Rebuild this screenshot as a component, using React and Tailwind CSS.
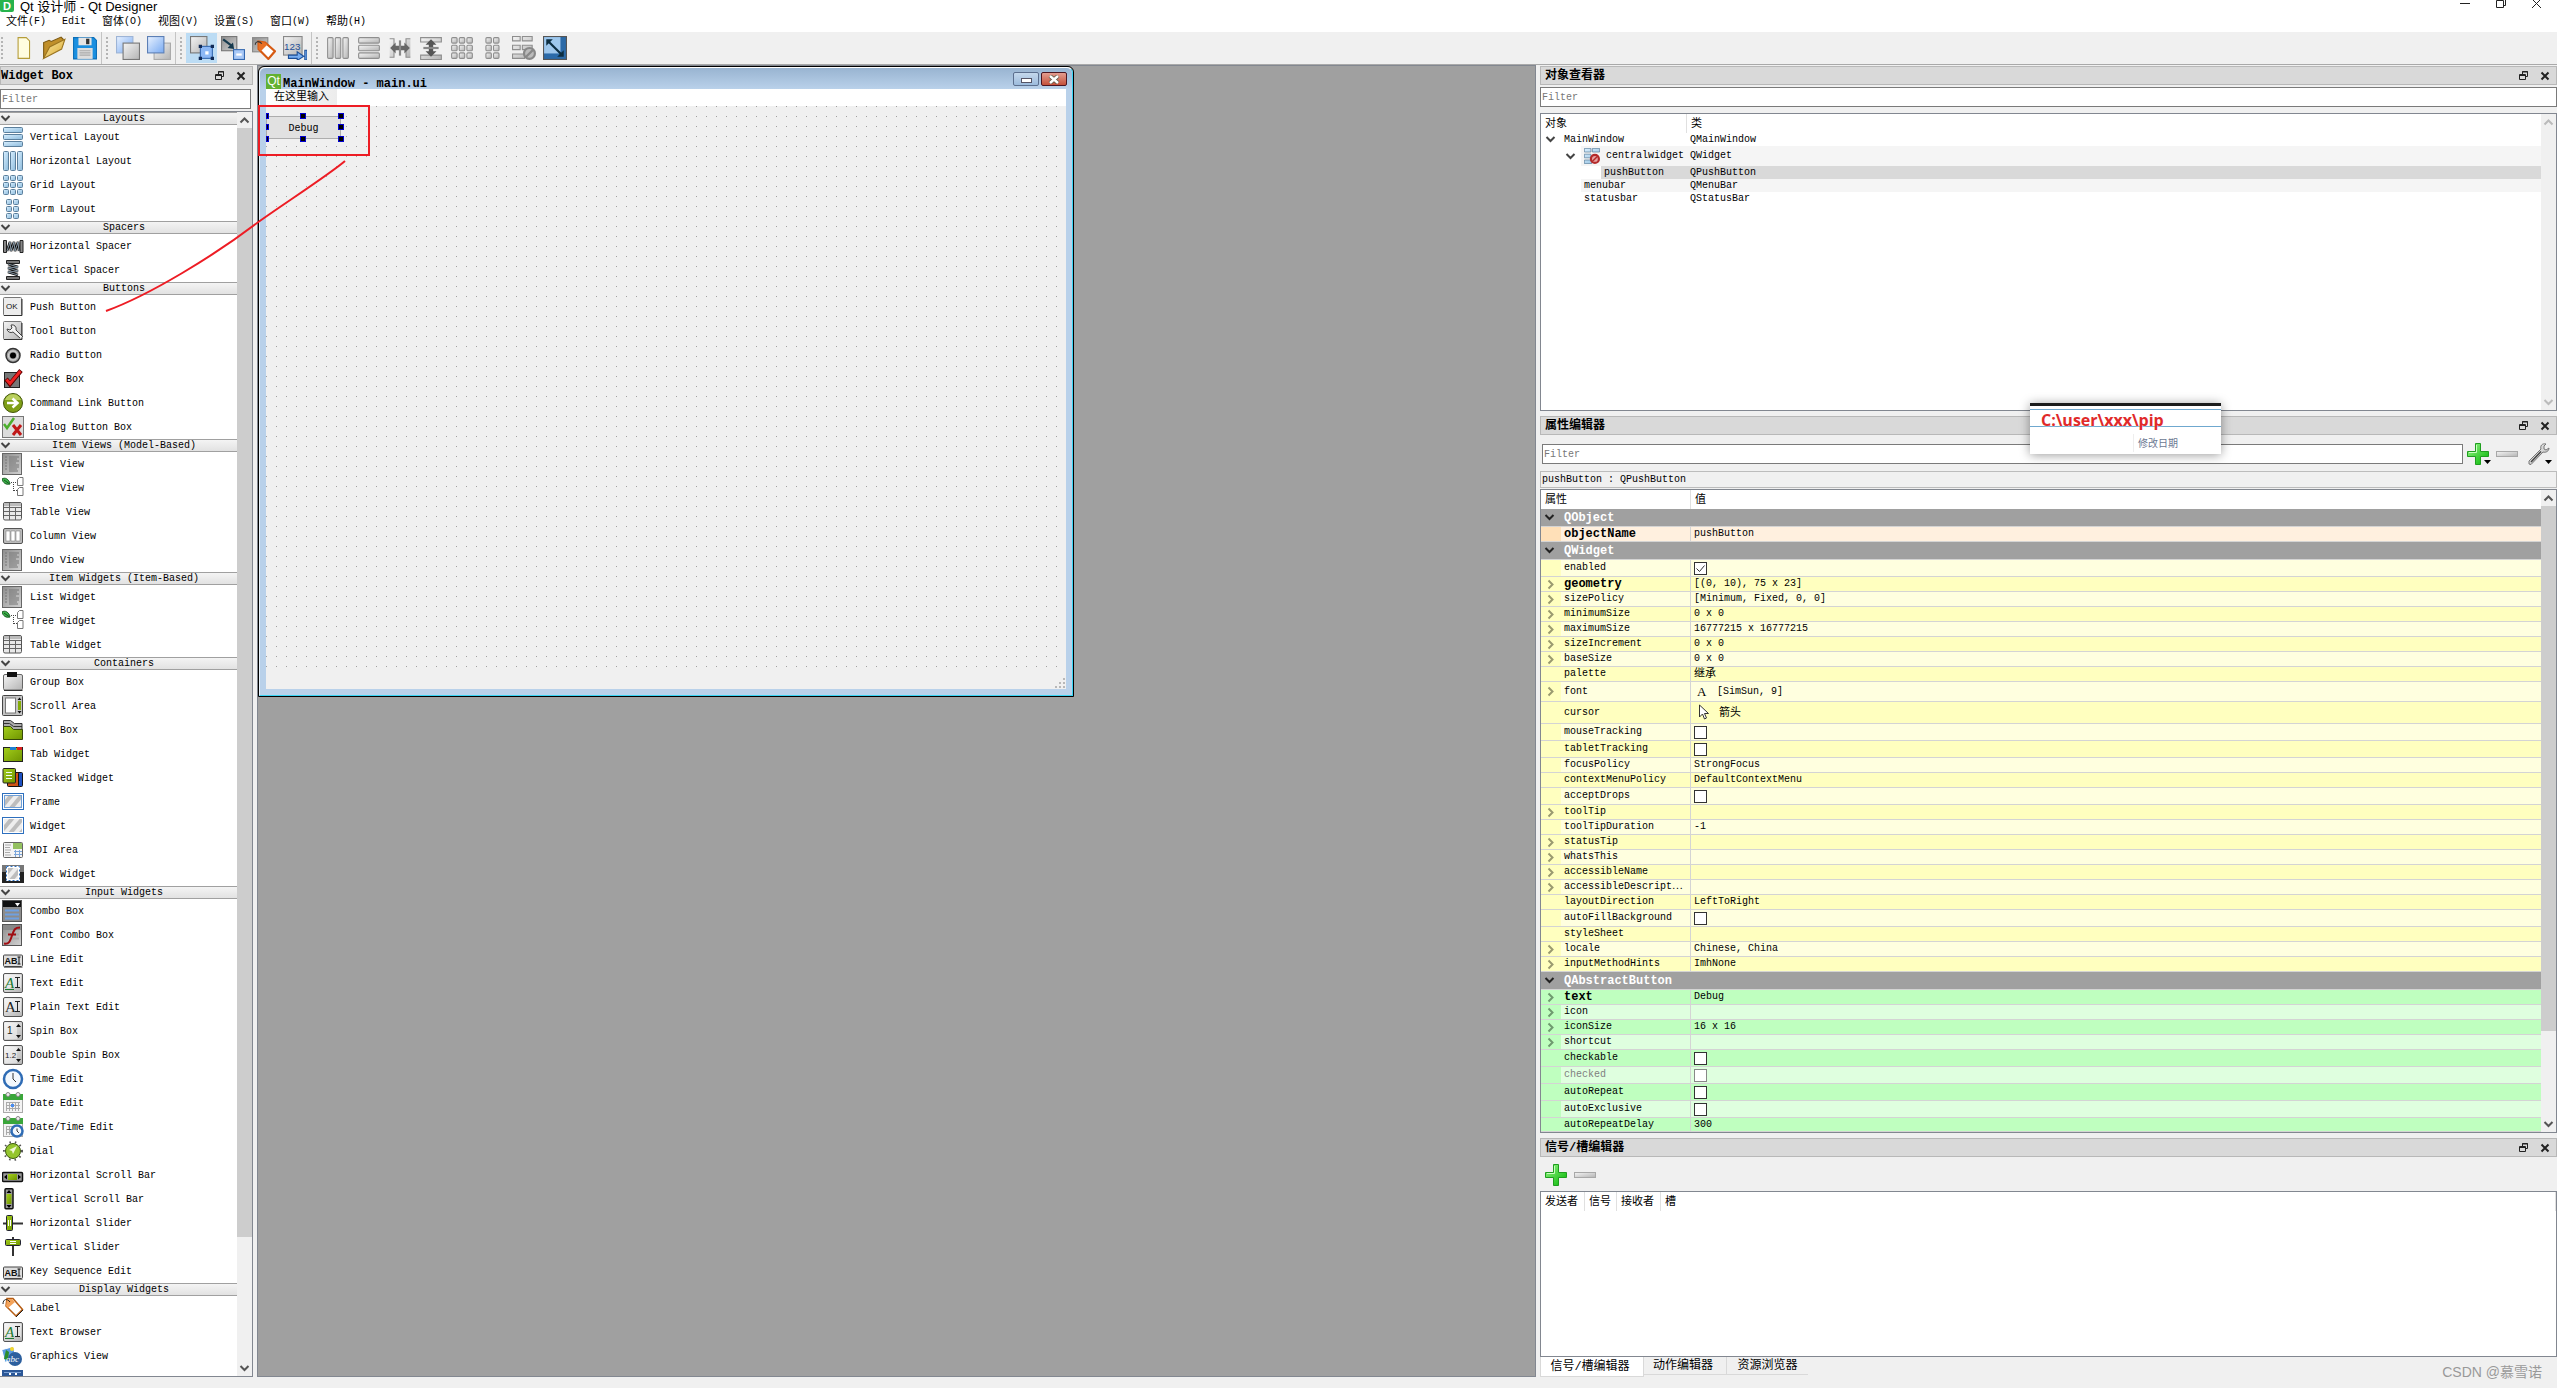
import { useState } from "react";

const blue = { fill: "url(#blue)", stroke: "#5b7f9c" };
const gray = { fill: "url(#silver)", stroke: "#8e8e8e" };

// Shared gradients for every icon on the page
function Gradients() {
  const stops = [
    ["blue", "#d8efff", "#8dbbdc"],
    ["silver", "#f4f4f4", "#b4b4b4"],
    ["steel", "#8d8d8d", "#d2d2d2"],
    ["green", "#a4cf1c", "#6f9400"],
    ["sky", "#e9f2ff", "#78aaf2"],
    ["gold", "#fbe9a6", "#d9a82e"],
    ["plus", "#9af78a", "#00b400"],
  ];
  return (
    <svg className="absolute size-0" aria-hidden="true">
      <defs>
        {stops.map(([id, a, b]) => (
          <linearGradient key={id} id={id} x1="0" y1="0" x2="1" y2="1">
            <stop offset="0" stopColor={a} />
            <stop offset="1" stopColor={b} />
          </linearGradient>
        ))}
        <pattern id="hatch" width="8" height="8" patternUnits="userSpaceOnUse" patternTransform="rotate(40)">
          <rect width="8" height="8" fill="#eee" />
          <rect width="4" height="8" fill="#bdbdbd" />
        </pattern>
      </defs>
    </svg>
  );
}

function Svg({ size = 22, children }) {
  return (
    <svg
      width={size}
      height={size}
      viewBox="0 0 22 22"
      fill="none"
      className="shrink-0"
      aria-hidden="true"
    >
      {children}
    </svg>
  );
}

/* ---------- layout icons ---------- */

const STEPS = [1.5, 8.5, 15.5];
const Rows = ({ c }) => STEPS.map((y) => <rect key={y} x="1.5" y={y} width="19" height="5" rx="1" {...c} />);
const Cols = ({ c }) => STEPS.map((x) => <rect key={x} x={x} y="1.5" width="5" height="19" rx="1" {...c} />);
const Cells = ({ c, xs }) =>
  xs.map((x) => STEPS.map((y) => <rect key={x + "-" + y} x={x} y={y} width="5" height="5" rx="1" {...c} />));

/* ---------- widget icons ---------- */

const Doc = () => (
  <>
    <rect x="0.5" y="0.5" width="19" height="21" fill="url(#steel)" stroke="#666" />
    <path d="M3 4h2M3 7h2M3 10h2M3 13h2M3 16h2M7 4h10M7 6h8M7 8h10M7 10h7M7 12h10M7 14h10M7 16h8M7 18h9" stroke="#777" />
  </>
);
const Tree = () => (
  <>
    <path d="M0 2c3-2 7 0 8 5C4 8 1 6 0 2z" fill="#3cb34a" stroke="#14591d" />
    <path d="M2 3l5 3.5" stroke="#14591d" />
    <path d="M9 5.5h5M11.500 7v8M12 13.500h3" stroke="#444" strokeDasharray="1 1" />
    <path d="M15.500 2.500l2-2h3.500v8h-5.500zM15.500 12.500l2-2h3.500v8h-5.500z" fill="#fff" stroke="#777" />
  </>
);
const TableIc = () => (
  <>
    <rect x="1.500" y="1.500" width="18" height="17.500" rx="1.500" fill="#e9e9e9" stroke="#555" />
    <rect x="2" y="2" width="17" height="3" fill="#bbb" />
    <path d="M2 6.500h17M2 10.500h17M2 14.500h17M7.500 2v17M13.500 6v13" stroke="#666" />
  </>
);
const Abi = () => (
  <>
    <rect x="1.500" y="7" width="19" height="11.500" rx="1" fill="#ddd" stroke="#444" />
    <path d="M2 19.500h18.500" stroke="#888" />
    <text x="2.500" y="16" fontSize="9" fontWeight="bold" fill="#111" fontFamily="Liberation Sans">AB</text>
    <path d="M15.500 9h3M17 9v7M15.500 16h3" stroke="#111" />
  </>
);
const TextA = ({ color, italic }) => (
  <>
    <rect x="1.500" y="1.500" width="19" height="19" rx="1.500" fill="url(#silver)" stroke="#555" />
    <rect x="3" y="3" width="16" height="13" fill="#fafafa" opacity=".5" />
    <text x="3" y="16" fontSize="15" fill={color} fontStyle={italic ? "italic" : "normal"} fontFamily="Liberation Serif">A</text>
    {italic && <path d="M3 17.500h9" stroke={color} />}
    <path d="M13 5.500h5M15.500 5.500v10M13 15.500h5" stroke="#222" />
  </>
);
const Spin = ({ label }) => (
  <>
    <rect x="1.500" y="1.500" width="19" height="19" rx="1.500" fill="url(#silver)" stroke="#555" />
    <rect x="3" y="3" width="12" height="16" fill="#fafafa" opacity=".5" />
    <text x={label.length > 1 ? 3 : 5} y="14" fontSize={label.length > 1 ? 8 : 10} fill="#222" fontFamily="Liberation Sans">{label}</text>
    <path d="M14 7l2.500-3L19 7zM14 15l2.500 3 2.500-3z" fill="#111" />
  </>
);
const Clock = ({ x = 11, y = 11, r = 9 }) => (
  <>
    <circle cx={x} cy={y} r={r} fill="#f3f8fd" stroke="#2f6cb5" strokeWidth="2.500" />
    <path d={`M${x} ${y - r + 3}V${y}l${r / 3} ${r / 3}`} stroke="#333" />
  </>
);
const Calendar = () => (
  <>
    <rect x="1.500" y="3.500" width="19" height="17" fill="#f3f3f3" stroke="#aaa" />
    <rect x="1" y="2" width="20" height="6" fill="#3aa63a" />
    <path d="M4 10.500h14M4 13.500h14M4 16.500h14M4.500 10v9M7.500 10v9M10.500 10v9M13.500 10v9M16.500 10v9" stroke="#aaa" />
    <circle cx="6" cy="2.500" r="2" fill="#eee" stroke="#888" />
    <circle cx="16" cy="2.500" r="2" fill="#eee" stroke="#888" />
  </>
);

const ICONS = {
  vbox: <Rows c={blue} />,
  hbox: <Cols c={blue} />,
  grid: <Cells c={blue} xs={STEPS} />,
  form: <Cells c={blue} xs={[4.5, 11.5]} />,
  hspacer: (
    <>
      <path d="M1.500 5.500h3v12h-3zM18 5.500h3v12h-3z" fill="#888" stroke="#222" />
      <path d="M5 16l3-9 1 9 3-9 1 9 3-9 1 9" stroke="#111" strokeWidth="2.500" />
      <path d="M5 16l3-9 1 9 3-9 1 9 3-9 1 9" stroke="#9fb4c4" strokeWidth=".8" />
    </>
  ),
  vspacer: (
    <>
      <path d="M4.500 1.500h13v3h-13zM4.500 17.500h13v3h-13z" fill="#777" stroke="#222" />
      <path d="M6 5l10 3-10 1 10 3-10 1 10 3" stroke="#111" strokeWidth="2.500" />
      <path d="M6 5l10 3-10 1 10 3-10 1 10 3" stroke="#9fb4c4" strokeWidth=".8" />
    </>
  ),
  push: (
    <>
      <rect x="1.500" y="1.500" width="18" height="18" rx="1" fill="#ececec" stroke="#777" />
      <path d="M2 19.500h18V3" stroke="#333" />
      <text x="4" y="13" fontSize="8" fill="#111" fontFamily="Liberation Sans">OK</text>
    </>
  ),
  tool: (
    <>
      <rect x="1.500" y="1.500" width="18" height="18" rx="1" fill="url(#silver)" stroke="#777" />
      <path d="M2 19.500h18V3" stroke="#333" />
      <path d="M18 18l-7-6a4 4 0 0 1-6-3l3 1 2-2-1-3a4 4 0 0 1 5 5l7 7" fill="#f2f2f2" stroke="#444" />
    </>
  ),
  radio: (
    <>
      <circle cx="11" cy="11.500" r="7" fill="#a5a5a5" stroke="#333" strokeWidth="1.500" />
      <circle cx="11" cy="11.500" r="4.500" stroke="#ddd" />
      <circle cx="11" cy="11.500" r="3" fill="#000" />
    </>
  ),
  check: (
    <>
      <rect x="2.500" y="4.500" width="15" height="15" fill="#777" stroke="#222" />
      <path d="M4 11l4 5L19 2.500" stroke="#5b0000" strokeWidth="4.500" />
      <path d="M4.500 11.500l3.500 4L18.500 3" stroke="#e22" strokeWidth="2.800" />
    </>
  ),
  cmdlink: (
    <>
      <circle cx="11" cy="11" r="9.500" fill="#7f9f17" stroke="#43560a" />
      <path d="M3 8a8.500 8.500 0 0 1 16 0z" fill="#b9cf5e" />
      <path d="M5 11h9M10.500 6.500l5 4.500-5 4.500" stroke="#fff" strokeWidth="2.500" />
    </>
  ),
  dialog: (
    <>
      <rect x="0.500" y="0.500" width="21" height="21" fill="#dcdcdc" stroke="#777" />
      <path d="M2 8l3 4 7-10" stroke="#4caf2d" strokeWidth="2.500" />
      <path d="M11 9l8 10M19 9l-8 10" stroke="#c01818" strokeWidth="3" />
    </>
  ),
  list: <Doc />,
  tree: <Tree />,
  table: <TableIc />,
  column: (
    <>
      <rect x="1.500" y="3.500" width="19" height="15" rx="1.500" fill="#bbb" stroke="#555" />
      <path d="M4 6h4v10H4zM9 6h4v10H9zM14 6h4v10h-4z" fill="#fff" stroke="#888" strokeWidth=".6" />
    </>
  ),
  group: (
    <>
      <rect x="1.500" y="3.500" width="19" height="15.500" rx="1.500" fill="url(#silver)" stroke="#666" />
      <path d="M2 19.500h18.500" stroke="#333" />
      <rect x="5" y="1" width="10" height="5" fill="#111" />
    </>
  ),
  scroll: (
    <>
      <rect x="0.500" y="0.500" width="20" height="20" rx="1" fill="#c4c4c4" stroke="#444" />
      <rect x="3.500" y="3" width="10" height="15" fill="#fff" stroke="#777" />
      <rect x="16" y="6" width="3" height="9" fill="#84ac07" />
      <path d="M15.500 5l2-2.500 2 2.500zM15.500 16l2 2.500 2-2.500z" fill="#111" />
    </>
  ),
  toolbox: (
    <>
      <path d="M1.500 1.500h7l4 3h7.500v8H1.500z" fill="#aaa" stroke="#333" />
      <path d="M1.500 4.500h6l4 3h8.500" stroke="#333" />
      <path d="M1.500 7.500h7l3 3h9v10h-19z" fill="url(#green)" stroke="#36480a" />
    </>
  ),
  tab: (
    <>
      <rect x="1.500" y="4.500" width="19" height="14" fill="url(#green)" stroke="#222" />
      <rect x="8" y="4" width="6" height="3" fill="#1d7fd1" />
      <rect x="15" y="4" width="5" height="3" fill="#d92020" />
    </>
  ),
  stacked: (
    <>
      <rect x="8.500" y="5.500" width="12" height="14" rx="1" fill="#1d50c2" stroke="#111" />
      <rect x="5.500" y="5.500" width="11" height="14" rx="1" fill="#cf5417" stroke="#111" />
      <rect x="1" y="1.500" width="12.500" height="14.500" rx="1" fill="url(#green)" stroke="#222" />
      <path d="M4 5.500h6M4 8.500h6M4 11.500h6" stroke="#efe" />
    </>
  ),
  frame: (
    <>
      <rect x="0.500" y="2.500" width="21" height="16" fill="#fff" stroke="#2d6fbe" />
      <rect x="2.500" y="4.500" width="17" height="12" fill="url(#hatch)" stroke="#6f9fd6" />
    </>
  ),
  widget: (
    <>
      <rect x="0.500" y="2.500" width="21" height="16" fill="#fff" stroke="#2d6fbe" />
      <rect x="2" y="4" width="18" height="13" fill="url(#hatch)" />
    </>
  ),
  mdi: (
    <>
      <rect x="1.500" y="3.500" width="19" height="15" rx="1" fill="#f4f4f4" stroke="#666" />
      <rect x="11" y="4" width="9" height="6" fill="#94c160" />
      <path d="M3 6h6M3 8.500h5M3 11h6M3 13.500h5M3 16h6" stroke="#aaa" />
      <path d="M12 12.500h8M12 15.500h8M13.500 11v7M17.500 11v7" stroke="#7ba6db" />
    </>
  ),
  dock: (
    <>
      <rect y="2" width="22" height="18" fill="#222" />
      <rect y="2" width="22" height="7" fill="#777" />
      <rect x="5" y="4" width="12" height="13" fill="url(#hatch)" stroke="#fff" strokeWidth="2" />
      <rect x="4.500" y="3.500" width="13" height="14" stroke="#2d6fbe" strokeDasharray="2 2" />
    </>
  ),
  combo: (
    <>
      <rect x="0.500" y="0.500" width="19" height="21" fill="#8c8c8c" stroke="#555" />
      <rect x="1" y="1" width="18" height="6" fill="#111" />
      <path d="M13 3h5l-2.500 3.500z" fill="#fff" />
      <path d="M3 10.500h14M3 14.500h14M3 18.500h14" stroke="#6fa0e0" strokeWidth="2" />
    </>
  ),
  fontcombo: (
    <>
      <rect x="0.500" y="0.500" width="19" height="21" fill="url(#steel)" stroke="#555" />
      <rect x="1" y="1" width="18" height="5" fill="#888" />
      <path d="M4 10.500h13M4 14.500h13" stroke="#aaa" strokeWidth="2" />
      <path d="M2 19.500c5 1 6-2 8-8s3-8 8-8M6 10.500h8" stroke="#a00d12" strokeWidth="2" />
    </>
  ),
  abi: <Abi />,
  textedit: <TextA color="#1c7a30" italic />,
  plaintext: <TextA color="#222" />,
  spin: <Spin label="1" />,
  dspin: <Spin label="1.2" />,
  time: <Clock />,
  date: (
    <>
      <Calendar />
      <rect x="9" y="12" width="3" height="3" fill="#4a8df0" />
    </>
  ),
  datetime: (
    <>
      <Calendar />
      <Clock x={15} y={15} r={5.5} />
    </>
  ),
  dial: (
    <>
      <circle cx="11" cy="11" r="9" stroke="#555" strokeWidth="2" strokeDasharray="1.500 4" />
      <circle cx="11" cy="11" r="7.500" fill="#94c52e" stroke="#3d5c0c" />
      <path d="M7 10l8-4-4 8-1-3z" fill="#eef7d6" />
    </>
  ),
  hscroll: (
    <>
      <rect x="0.500" y="8.500" width="20" height="9" rx="1" fill="#999" stroke="#111" strokeWidth="1.500" />
      <rect x="6" y="10" width="9" height="6" fill="url(#green)" />
      <path d="M5 10.500v5L2 13zM16 10.500v5l3-2.500z" fill="#000" />
    </>
  ),
  vscroll: (
    <>
      <rect x="3" y="0.800" width="8" height="20" rx="1" fill="#999" stroke="#111" strokeWidth="1.500" />
      <rect x="4.500" y="6" width="5" height="10" fill="url(#green)" />
      <path d="M4.500 5h5L7 2zM4.500 17h5L7 20z" fill="#000" />
    </>
  ),
  hslider: (
    <>
      <path d="M1 11.500h20" stroke="#333" strokeWidth="2" />
      <rect x="4.500" y="3.500" width="6" height="15" rx="1" fill="url(#green)" stroke="#223" />
      <path d="M6.500 8v6M8.500 8v6" stroke="#fff" />
    </>
  ),
  vslider: (
    <>
      <path d="M11 1v19" stroke="#333" strokeWidth="2" />
      <rect x="3.500" y="3.500" width="15" height="6" rx="1" fill="url(#green)" stroke="#223" />
      <path d="M8 5.500h6M8 7.500h6" stroke="#fff" />
    </>
  ),
  label: (
    <>
      <path d="M5 1.500h6l9.500 11L14 19 4 9z" fill="#fff" stroke="#b65c12" strokeWidth="1.500" />
      <path d="M5 2h5l3 3-7 6-2-2z" fill="#f4a35a" />
      <path d="M1 7c0-5 4-6 7-2M14 20l7-7" stroke="#222" />
    </>
  ),
  graphics: (
    <>
      <rect x="1" y="3" width="12" height="13" fill="#5a9ae0" stroke="#fff" transform="rotate(-15 7 9)" />
      <path d="M2 14l2-9 3 2-1 8z" fill="#2b8d2b" />
      <circle cx="10" cy="4" r="2" fill="#f3d62e" />
      <circle cx="13" cy="14" r="7" fill="#2c5f9e" />
      <text x="4" y="17" fontSize="9" fontStyle="italic" fill="#fff" fontFamily="Liberation Serif">abc</text>
    </>
  ),
  calendar: (
    <>
      <rect y="1" width="21" height="20" fill="#2b5797" />
      <path d="M2 3.500h17" stroke="#7aa0d4" />
      <path d="M7 5h2M13 5h2" stroke="#fff" strokeWidth="2" />
    </>
  ),
};

const SECTIONS = [
  ["Layouts", [["vbox", "Vertical Layout"], ["hbox", "Horizontal Layout"], ["grid", "Grid Layout"], ["form", "Form Layout"]]],
  ["Spacers", [["hspacer", "Horizontal Spacer"], ["vspacer", "Vertical Spacer"]]],
  ["Buttons", [["push", "Push Button"], ["tool", "Tool Button"], ["radio", "Radio Button"], ["check", "Check Box"], ["cmdlink", "Command Link Button"], ["dialog", "Dialog Button Box"]]],
  ["Item Views (Model-Based)", [["list", "List View"], ["tree", "Tree View"], ["table", "Table View"], ["column", "Column View"], ["list", "Undo View"]]],
  ["Item Widgets (Item-Based)", [["list", "List Widget"], ["tree", "Tree Widget"], ["table", "Table Widget"]]],
  ["Containers", [["group", "Group Box"], ["scroll", "Scroll Area"], ["toolbox", "Tool Box"], ["tab", "Tab Widget"], ["stacked", "Stacked Widget"], ["frame", "Frame"], ["widget", "Widget"], ["mdi", "MDI Area"], ["dock", "Dock Widget"]]],
  ["Input Widgets", [["combo", "Combo Box"], ["fontcombo", "Font Combo Box"], ["abi", "Line Edit"], ["textedit", "Text Edit"], ["plaintext", "Plain Text Edit"], ["spin", "Spin Box"], ["dspin", "Double Spin Box"], ["time", "Time Edit"], ["date", "Date Edit"], ["datetime", "Date/Time Edit"], ["dial", "Dial"], ["hscroll", "Horizontal Scroll Bar"], ["vscroll", "Vertical Scroll Bar"], ["hslider", "Horizontal Slider"], ["vslider", "Vertical Slider"], ["abi", "Key Sequence Edit"]]],
  ["Display Widgets", [["label", "Label"], ["textedit", "Text Browser"], ["graphics", "Graphics View"], ["calendar", ""]]],
];

// kind: g = group header, c = check box, t = plain value
const PROPS = [
  { kind: "g", name: "QObject" },
  { tone: "peach", name: "objectName", value: "pushButton", bold: true },
  { kind: "g", name: "QWidget" },
  { kind: "c", name: "enabled", checked: true },
  { name: "geometry", value: "[(0, 10), 75 x 23]", bold: true, sub: true },
  { name: "sizePolicy", value: "[Minimum, Fixed, 0, 0]", sub: true },
  { name: "minimumSize", value: "0 x 0", sub: true },
  { name: "maximumSize", value: "16777215 x 16777215", sub: true },
  { name: "sizeIncrement", value: "0 x 0", sub: true },
  { name: "baseSize", value: "0 x 0", sub: true },
  { name: "palette", value: "继承", cjk: true },
  { kind: "font", name: "font", value: "[SimSun, 9]", sub: true },
  { kind: "cursor", name: "cursor", value: "箭头", cjk: true },
  { kind: "c", name: "mouseTracking" },
  { kind: "c", name: "tabletTracking" },
  { name: "focusPolicy", value: "StrongFocus" },
  { name: "contextMenuPolicy", value: "DefaultContextMenu" },
  { kind: "c", name: "acceptDrops" },
  { name: "toolTip", sub: true },
  { name: "toolTipDuration", value: "-1" },
  { name: "statusTip", sub: true },
  { name: "whatsThis", sub: true },
  { name: "accessibleName", sub: true },
  { name: "accessibleDescript⋯", sub: true },
  { name: "layoutDirection", value: "LeftToRight" },
  { kind: "c", name: "autoFillBackground" },
  { name: "styleSheet" },
  { name: "locale", value: "Chinese, China", sub: true },
  { name: "inputMethodHints", value: "ImhNone", sub: true },
  { kind: "g", name: "QAbstractButton" },
  { tone: "green", name: "text", value: "Debug", bold: true, sub: true },
  { tone: "green", name: "icon", sub: true },
  { tone: "green", name: "iconSize", value: "16 x 16", sub: true },
  { tone: "green", name: "shortcut", sub: true },
  { tone: "green", kind: "c", name: "checkable" },
  { tone: "green", kind: "c", name: "checked", disabled: true },
  { tone: "green", kind: "c", name: "autoRepeat" },
  { tone: "green", kind: "c", name: "autoExclusive" },
  { tone: "green", kind: "last", name: "autoRepeatDelay", value: "300" },
];

const TONES = {
  peach: ["bg-[#ffe0b8]", "bg-[#fff0df]"],
  yellow: ["bg-[#ffffbf]", "bg-[#ffffdf]"],
  green: ["bg-[#bfffbf]", "bg-[#dfffdf]"],
};

const HEIGHTS = { g: "h-[18px]", c: "h-[17px]", font: "h-[20px]", cursor: "h-[22px]", last: "h-[14px]" };

function Chevron({ dir = "down", color = "#444" }) {
  const paths = {
    down: "M1.500 3l4 4 4-4",
    up: "M1.500 7.500l4-4 4 4",
    right: "M3.500 1.500l4 4-4 4",
  };
  return (
    <svg width="11" height="11" viewBox="0 0 11 11" fill="none" className="block shrink-0" aria-hidden="true">
      <path d={paths[dir]} stroke={color} strokeWidth="2" />
    </svg>
  );
}

function DockTitle({ title, pad = "pl-1" }) {
  return (
    <header className={"flex h-[19px] shrink-0 items-center border border-[#b8b8b8] bg-[#d9d9d9] pr-[6px] " + pad}>
      <h2 className="flex-1 text-[12px] leading-[14px] font-bold">{title}</h2>
      <button aria-label="Float" className="mr-[11px]">
        <svg width="10" height="10" viewBox="0 0 10 10" fill="none" stroke="#222">
          <path d="M3.500 3V.500h5v5H7M3 1h6" />
          <path d="M.500 3.500h6v5h-6zM.500 4.500h6" />
        </svg>
      </button>
      <button aria-label="Close">
        <svg width="10" height="10" viewBox="0 0 10 10" fill="none" stroke="#222" strokeWidth="2">
          <path d="M1.500 1.500l7 7M8.500 1.500l-7 7" />
        </svg>
      </button>
    </header>
  );
}

function FilterInput({ className = "" }) {
  return (
    <input
      aria-label="Filter"
      placeholder="Filter"
      className={"h-[20px] border border-[#7a7a7a] bg-white px-px text-[10px] placeholder:text-[#777] " + className}
    />
  );
}

function ScrollBar({ thumb = "", disabled = false }) {
  const color = disabled ? "#bbb" : "#555";
  return (
    <div className="flex w-[15px] shrink-0 flex-col items-center bg-[#f0f0f0]">
      <div className="flex h-[16px] items-center"><Chevron dir="up" color={color} /></div>
      <div className="flex w-full flex-1 flex-col">
        <div className={"w-full bg-[#cdcdcd] " + thumb} />
      </div>
      <div className="flex h-[16px] items-center"><Chevron color={color} /></div>
    </div>
  );
}

function WidgetBox() {
  return (
    <aside className="flex w-[253px] shrink-0 flex-col pt-px">
      <DockTitle title="Widget Box" pad="pl-0" />
      <FilterInput className="mt-1 mr-[2px] shrink-0" />
      <div className="mt-[2px] flex min-h-0 flex-1 border border-l-0 border-[#828790] bg-white">
        <div className="min-w-0 flex-1 overflow-hidden">
          {SECTIONS.map(([title, items]) => (
            <section key={title}>
              <button className="flex h-[13px] w-full items-center border-y border-[#a0a0a0] bg-linear-to-b from-[#f4f4f4] to-[#e2e2e2] text-[10px] leading-[11px]">
                <Chevron />
                <span className="flex-1 text-center">{title}</span>
              </button>
              <ul>
                {items.map(([icon, text]) => (
                  <li key={text} className="flex h-[24px] items-center gap-[6px] pl-[2px]">
                    <Svg>{ICONS[icon]}</Svg>
                    {text}
                  </li>
                ))}
              </ul>
            </section>
          ))}
        </div>
        <ScrollBar thumb="h-[90%]" />
      </div>
    </aside>
  );
}

/* ---------- tool bar ---------- */

const TOOLS = [
  [
    ["New", <path d="M6.500 1.500H14l3 3v16H6.500z" fill="#fffde0" stroke="#b59d3a" />],
    ["Open", (
      <>
        <path d="M1.500 20V6l5-2 2 1 9-4 2 2v4z" fill="#c08f2a" stroke="#7d5a14" />
        <path d="M1.500 20.500L7 10l14-7-3 9z" fill="url(#gold)" stroke="#9a7420" />
      </>
    )],
    ["Save", (
      <>
        <path d="M.500 1.500H19l2.500 2.500v17H.500z" fill="#1a8fe0" stroke="#0d6fb8" />
        <rect x="5" y="1.500" width="12" height="7" fill="#e5e5e5" />
        <rect x="12" y="2.500" width="3" height="5" fill="#333" />
        <rect x="4" y="11" width="14" height="10" fill="#ddd" />
        <path d="M6 13.500h10M6 15.500h10M6 17.500h10" stroke="#aaa" />
      </>
    )],
  ],
  [
    ["Send to Back", (
      <>
        <rect x="0.500" y="0.500" width="15" height="15" fill="url(#sky)" stroke="#9db4d6" />
        <rect x="6.500" y="6.500" width="15" height="15" fill="url(#silver)" stroke="#777" />
      </>
    )],
    ["Bring to Front", (
      <>
        <rect x="6.500" y="6.500" width="15" height="15" fill="url(#silver)" stroke="#aaa" />
        <rect x="0.500" y="0.500" width="15" height="15" fill="url(#sky)" stroke="#5c7fb5" />
      </>
    )],
  ],
  [
    ["Edit Widgets", (
      <>
        <rect x="0.500" y="0.500" width="15" height="15" fill="url(#silver)" stroke="#777" />
        <rect x="9.500" y="9.500" width="11" height="11" fill="#8cb8f5" stroke="#3569b0" />
        <path d="M8 8h3v3H8zM19 8h3v3h-3zM8 19h3v3H8zM19 19h3v3h-3z" fill="#112a55" />
        <path d="M14 14h3v3h-3z" fill="#fff" />
      </>
    ), true],
    ["Edit Signals/Slots", (
      <>
        <rect x="0.500" y="0.500" width="14" height="13" fill="url(#steel)" stroke="#777" />
        <rect x="11.500" y="12.500" width="10" height="9" fill="#a9c9f7" stroke="#3569b0" />
        <path d="M14 17h5" stroke="#fff" strokeWidth="2" />
        <path d="M2 3l8 6" stroke="#173a4e" strokeWidth="2" />
        <path d="M12 12l-1-6-5 5z" fill="#173a4e" />
      </>
    )],
    ["Edit Buddies", (
      <>
        <rect x="0.500" y="1.500" width="14" height="13" fill="url(#steel)" stroke="#888" />
        <path d="M6 5l6 1 9 8-6 7-9-9z" fill="#fff" stroke="#d65a12" strokeWidth="2" />
        <path d="M6 5l6 1 2 2-6 6-2-2z" fill="#e87025" />
        <path d="M3 8c0-3 3-4 6-1" stroke="#333" />
      </>
    )],
    ["Edit Tab Order", (
      <>
        <rect x="0.500" y="0.500" width="17" height="17" fill="url(#silver)" stroke="#888" />
        <text x="1" y="13" fontSize="9" fill="#1c4f98" fontFamily="Liberation Sans">123</text>
        <path d="M5 17.500h8v-3l6 4-6 4v-2H5zM20 13h2v9h-2z" fill="#77aef2" stroke="#1c4f98" />
      </>
    )],
  ],
  [
    ["Lay Out Horizontally", <Cols c={gray} />],
    ["Lay Out Vertically", <Rows c={gray} />],
    ["Horizontal Splitter", (
      <>
        <path d="M1.500 2.500h4v17h-4M20.500 2.500h-4v17h4" {...gray} />
        <path d="M2 11l5-5v3h8V6l5 5-5 5v-3H7v3z" fill="#666" />
        <path d="M11 4v14" stroke="#888" strokeWidth="2" />
      </>
    )],
    ["Vertical Splitter", (
      <>
        <path d="M1.500 1.500h19v4h-19zM1.500 17.500h19v4h-19z" {...gray} />
        <path d="M11 3l5 5h-3v6h3l-5 5-5-5h3V8H6z" fill="#555" />
        <path d="M4 11h14" stroke="#888" strokeWidth="2" />
      </>
    )],
    ["Lay Out in a Grid", <Cells c={gray} xs={STEPS} />],
    ["Lay Out in a Form", <Cells c={gray} xs={[4.5, 11.5]} />],
    ["Break Layout", (
      <>
        <path d="M.500.500h7v4h-7zM9.500.500h9v4h-9zM.500 8.500h7v4h-7zM9.500 8.500h9v4h-9zM.500 16.500h11v4H.500z" {...gray} />
        <circle cx="16" cy="16" r="5" fill="#bbb" stroke="#888" strokeWidth="2" />
        <path d="M12.500 19.500l7-7" stroke="#888" strokeWidth="2" />
      </>
    )],
    ["Adjust Size", (
      <>
        <rect x="0.500" y="0.500" width="21" height="21" fill="#2b6aa8" stroke="#555" />
        <rect x="1" y="1" width="15" height="15" fill="#9ec7ec" />
        <path d="M5 5l12 12" stroke="#0c2d40" strokeWidth="2" />
        <path d="M3 3h6L3 9zM19 19h-6l6-6z" fill="#0c2d40" />
      </>
    )],
  ],
];

function ToolBar() {
  return (
    <div className="flex h-[33px] shrink-0 border-b border-[#a9a9a9] bg-[#f0f0f0]">
      {TOOLS.map((group, i) => (
        <div key={i} className="flex items-center border-r border-[#c4c4c4] pr-px last:border-r-0">
          <div className={(i === 0 ? "w-[7px] pl-px" : "w-[10px] pl-1") + " flex flex-col gap-[2px]"}>
            {[0, 1, 2, 3, 4, 5].map((n) => (
              <span key={n} className="size-[2px] bg-[#b4b4b4]" />
            ))}
          </div>
          {group.map(([name, icon, active]) => (
            <button
              key={name}
              title={name}
              className={"flex h-[30px] w-[31px] items-center justify-center " + (active ? "bg-[#bcdcf4]" : "")}
            >
              <Svg size={24}>{icon}</Svg>
            </button>
          ))}
        </div>
      ))}
    </div>
  );
}

/* ---------- form window ---------- */

const HANDLES = [
  "left-0 top-[-3px] w-[3px]",
  "left-[34px] top-[-3px] w-[6px]",
  "left-[72px] top-[-3px] w-[6px]",
  "left-0 top-[8px] w-[3px]",
  "left-[72px] top-[8px] w-[6px]",
  "left-0 top-[20px] w-[3px]",
  "left-[34px] top-[20px] w-[6px]",
  "left-[72px] top-[20px] w-[6px]",
];

function FormWindow() {
  return (
    <div className="absolute top-0 left-0 w-[816px] rounded-t-md border border-black">
      <div className="rounded-t-md border border-t-white border-r-[#39d5f5] border-b-[#39d5f5] border-l-[#e6f1fb] bg-[#b9d1ea] px-[6px] pb-[6px]">
        <div className="-mx-[6px] flex h-[21px] items-start rounded-t-md bg-linear-to-b from-[#99b4d1] to-[#b9d1ea] pt-1 pr-[5px] pl-[6px]">
          <span className="mt-[2px] flex size-[15px] items-center justify-center bg-[#62b132] font-['Liberation_Sans'] text-[12px] leading-[15px] text-white">
            Qt
          </span>
          <h2 className="mt-1 ml-[2px] flex-1 text-[12px] leading-[16px] font-bold">MainWindow - main.ui</h2>
          <button aria-label="Minimize" className="mr-[2px] flex h-[14px] w-[26px] items-center justify-center rounded-xs border border-[#5c6f8e] bg-linear-to-b from-[#c5d8ec] to-[#9cbbdc]">
            <span className="mt-[3px] h-[5px] w-[11px] border border-[#556] bg-white" />
          </button>
          <button aria-label="Close form" className="flex h-[14px] w-[26px] items-center justify-center rounded-xs border border-[#4c1520] bg-linear-to-b from-[#e39c8f] to-[#c4503a]">
            <svg width="12" height="9" viewBox="0 0 12 9" fill="none">
              <path d="M2 1l8 7M10 1L2 8" stroke="#554" strokeWidth="4" />
              <path d="M2 1l8 7M10 1L2 8" stroke="#fff" strokeWidth="2.500" />
            </svg>
          </button>
        </div>
        <div className="h-[17px] bg-white">
          <span className="inline-block h-[16px] w-[71px] bg-linear-to-r from-white to-[#ececec] pl-2 text-[11px] leading-[16px]">
            在这里输入
          </span>
        </div>
        <div className="relative h-[583px] bg-[#f0f0f0]">
          <div className="h-[561px] bg-[linear-gradient(90deg,#f0f0f0_9px,transparent_9px),linear-gradient(#a0a0a0_1px,transparent_1px)] bg-[size:10px_10px] bg-[position:1px_0,0_0]" />
          <button className="absolute top-[10px] left-0 h-[23px] w-[75px] border border-[#adadad] bg-[#e1e1e1] pt-[2px] text-[10px]">
            Debug
          </button>
          <div className="absolute top-[10px] left-0">
            {HANDLES.map((pos) => (
              <span key={pos} className={"absolute h-[6px] border border-[#0000d0] bg-black " + pos} />
            ))}
          </div>
          <svg width="12" height="12" viewBox="0 0 12 12" className="absolute right-0 bottom-0" fill="#b8b8b8">
            <path d="M9 1h2v2H9zM9 5h2v2H9zM9 9h2v2H9zM5 5h2v2H5zM5 9h2v2H5zM1 9h2v2H1z" />
          </svg>
        </div>
      </div>
    </div>
  );
}

/* ---------- right docks ---------- */

const OBJECTS = [
  { name: "MainWindow", cls: "QMainWindow", pad: "ml-1", open: true, bg: "bg-white" },
  { name: "centralwidget", cls: "QWidget", pad: "ml-[24px]", open: true, icon: true, bg: "bg-[#f5f5f5]" },
  { name: "pushButton", cls: "QPushButton", pad: "ml-[60px]", bg: "bg-[#d9d9d9]" },
  { name: "menubar", cls: "QMenuBar", pad: "ml-[40px]", bg: "bg-[#f5f5f5]" },
  { name: "statusbar", cls: "QStatusBar", pad: "ml-[40px]", bg: "bg-white" },
];

function ObjectInspector() {
  return (
    <section className="flex shrink-0 flex-col">
      <DockTitle title="对象查看器" />
      <FilterInput className="mt-[2px]" />
      <div className="mt-[6px] flex h-[298px] border border-[#828790] bg-white">
        <div className="flex-1">
          <table className="w-full table-fixed border-separate border-spacing-0 text-left leading-[12px]">
            <thead>
              <tr className="h-[19px] text-[11px]">
                <th className="w-[146px] border-r border-[#e0e0e0] pl-1 font-normal">对象</th>
                <th className="pl-1 font-normal">类</th>
              </tr>
            </thead>
            <tbody>
              {OBJECTS.map((o) => (
                <tr key={o.name}>
                  <td className="p-0">
                    <div className={"flex " + o.pad}>
                      {o.open && <span className="flex w-[16px] items-center"><Chevron /></span>}
                      <div className={"flex flex-1 items-center pl-[3px] whitespace-nowrap " + o.bg + (o.icon ? " h-[20px]" : " h-[13px]")}>
                        {o.icon && (
                          <span className="mr-[6px]">
                            <Svg size={16}>
                              <path d="M.500.500h9v5h-9zM11.500.500h10v5h-10zM.500 8.500h9v5h-9zM.500 16.500h10v5H.500z" {...blue} />
                              <circle cx="15" cy="15" r="5.500" fill="#e7a3a3" stroke="#b42b2b" strokeWidth="3" />
                              <path d="M11 19l8-8" stroke="#b42b2b" strokeWidth="2" />
                            </Svg>
                          </span>
                        )}
                        {o.name}
                      </div>
                    </div>
                  </td>
                  <td className={"py-0 pr-0 pl-[3px] " + o.bg}>{o.cls}</td>
                </tr>
              ))}
            </tbody>
          </table>
        </div>
        <ScrollBar disabled />
      </div>
    </section>
  );
}

function PropValue({ row }) {
  const [on, setOn] = useState(!!row.checked);
  if (row.kind === "c") {
    return (
      <span className="relative block size-[13px]">
        <input
          type="checkbox"
          aria-label={row.name}
          checked={on}
          disabled={row.disabled}
          onChange={() => setOn(!on)}
          className="block size-[13px] appearance-none border border-[#333] bg-white disabled:border-[#888]"
        />
        {on && (
          <svg width="13" height="13" viewBox="0 0 13 13" fill="none" className="pointer-events-none absolute inset-0">
            <path d="M2.500 6.500l3 3 5-6" stroke="#333" />
          </svg>
        )}
      </span>
    );
  }
  if (row.kind === "font") {
    return (
      <span className="flex items-center">
        <span className="w-[23px] pl-[3px] font-['Liberation_Serif'] text-[13px]">A</span>
        {row.value}
      </span>
    );
  }
  if (row.kind === "cursor") {
    return (
      <span className="flex items-center text-[11px]">
        <svg width="25" height="17" viewBox="0 0 25 17" fill="#fff" stroke="#333">
          <path d="M5.500 1v12l3-3 2 5 2-1-2-4.500h4z" />
        </svg>
        {row.value}
      </span>
    );
  }
  return <span className={row.cjk ? "block text-[11px]" : "block"}>{row.value}</span>;
}

function PlusIcon() {
  return (
    <Svg>
      <path d="M8.500.500h5v8h8v5h-8v8h-5v-8h-8v-5h8z" fill="url(#plus)" stroke="#1f9e1f" />
      <path d="M9.500 2v7.500H2" stroke="#c9ffc0" />
    </Svg>
  );
}

function MinusIcon() {
  return (
    <Svg>
      <rect x="0.500" y="8.500" width="21" height="5" fill="url(#silver)" stroke="#a8a8a8" />
    </Svg>
  );
}

function PropertyEditor() {
  return (
    <section className="relative mt-[5px] flex shrink-0 flex-col">
      <DockTitle title="属性编辑器" />
      <div className="flex h-[36px] items-center pt-[2px] pr-[5px] pl-[2px]">
        <FilterInput className="flex-1" />
        <button aria-label="Add dynamic property" className="ml-1 flex items-end"><PlusIcon /><Caret /></button>
        <button aria-label="Remove dynamic property" className="ml-[5px]"><MinusIcon /></button>
        <button aria-label="Configure" className="ml-[10px] flex items-end">
          <Svg>
            <path d="M1 21l2 .500L15 9c3 1 6-1 6-4l-3 2-2-1V3l2-2c-4-1-6 2-5 5L1 18z" fill="url(#silver)" stroke="#777" />
            <path d="M3 19L13 8.500" stroke="#444" strokeWidth="1.500" />
          </Svg>
          <Caret />
        </button>
      </div>
      <div className="h-[17px] border border-[#bcbcbc] px-px leading-[16px]">pushButton : QPushButton</div>
      <div className="mt-px flex border border-[#828790] bg-white">
        <div className="flex-1">
          <table className="w-full table-fixed border-separate border-spacing-0 text-left leading-[12px]">
            <colgroup>
              <col className="w-[20px]" />
              <col className="w-[130px]" />
              <col />
            </colgroup>
            <thead>
              <tr className="h-[19px] text-[11px]">
                <th colSpan={2} className="border-r border-[#e0e0e0] py-0 pl-1 font-normal">属性</th>
                <th className="py-0 pl-1 font-normal">值</th>
              </tr>
            </thead>
            <tbody>
              {PROPS.map((row, i) => {
                const height = HEIGHTS[row.kind] || "h-[15px]";
                if (row.kind === "g") {
                  return (
                    <tr key={row.name} className={height + " bg-[#a0a0a0] text-[12px] font-bold text-white"}>
                      <td className="border-b border-[#d4d4d4] py-0 pl-[3px]"><Chevron color="#222" /></td>
                      <td colSpan={2} className="border-b border-[#d4d4d4] py-0 pl-[3px]">{row.name}</td>
                    </tr>
                  );
                }
                const [dark, light] = TONES[row.tone || "yellow"];
                const striped = i % 2 === 0 && row.tone !== "peach";
                return (
                  <tr key={row.name} className={height + " " + (striped ? dark : light)}>
                    <td className={"border-b border-[#d4d4d4] py-0 pl-1 " + dark}>
                      {row.sub && <Chevron dir="right" color={row.tone === "green" ? "#6f9a6f" : "#9a9a70"} />}
                    </td>
                    <td
                      className={
                        "border-r border-b border-[#d4d4d4] py-0 pl-[3px] whitespace-nowrap " +
                        (row.bold ? "text-[12px] font-bold" : row.disabled ? "text-[#808080]" : "")
                      }
                    >
                      {row.name}
                    </td>
                    <td className="border-b border-[#d4d4d4] py-0 pl-[3px]"><PropValue row={row} /></td>
                  </tr>
                );
              })}
            </tbody>
          </table>
        </div>
        <ScrollBar thumb="h-[86%]" />
      </div>
      <PathCard />
    </section>
  );
}

function Caret() {
  return (
    <svg width="7" height="5" viewBox="0 0 7 5" className="-ml-[5px]" aria-hidden="true">
      <path d="M0 0h7L3.500 4z" />
    </svg>
  );
}

// Small pasted note that floats over the dock
function PathCard() {
  return (
    <div className="absolute top-[-13px] left-[490px] h-[51px] w-[191px] border-t-3 border-[#1c1c1c] bg-white font-['Open_Sans','Noto_Sans_CJK_SC',sans-serif] shadow-[0_1px_10px_rgba(0,0,0,0.4)]">
      <div className="mt-[3px] flex h-[18px] items-center border-y border-[#6fa8cf] pt-[3px] pl-[11px]">
        <span className="text-[16px] leading-[24px] font-bold text-[#e02a2a] [text-shadow:0_0_2px_white]">C:\user\xxx\pip</span>
      </div>
      <div className="mt-[7px] ml-[103px] border-l border-[#eee] pl-1 text-[10px] leading-[18px] text-[#6d7892]">修改日期</div>
    </div>
  );
}

function SignalEditor() {
  return (
    <section className="mt-[5px] flex min-h-0 flex-1 flex-col">
      <DockTitle title="信号/槽编辑器" />
      <div className="flex h-[34px] shrink-0 items-center gap-[7px] pt-[2px] pl-[5px]">
        <button aria-label="Add connection"><PlusIcon /></button>
        <button aria-label="Remove connection"><MinusIcon /></button>
      </div>
      <div className="min-h-0 flex-1 border border-[#828790] bg-white">
        <table className="w-full table-fixed border-separate border-spacing-0 text-left text-[11px] leading-[14px]">
          <thead>
            <tr className="h-[19px]">
              <th className="w-[44px] border-r border-[#e0e0e0] p-0 pl-1 font-normal whitespace-nowrap">发送者</th>
              <th className="w-[32px] border-r border-[#e0e0e0] p-0 pl-1 font-normal whitespace-nowrap">信号</th>
              <th className="w-[44px] border-r border-[#e0e0e0] p-0 pl-1 font-normal whitespace-nowrap">接收者</th>
              <th className="border-r border-[#e0e0e0] p-0 pl-1 font-normal">槽</th>
            </tr>
          </thead>
        </table>
      </div>
      <nav className="flex h-[20px] shrink-0 items-start text-[12px] leading-[18px]">
        <button className="h-[20px] w-[104px] border border-t-0 border-[#d9d9d9] bg-white pr-1">信号/槽编辑器</button>
        <button className="h-[18px] w-[83px] border-r border-b border-[#d9d9d9] pr-1">动作编辑器</button>
        <button className="h-[18px] w-[81px] border-b border-[#d9d9d9]">资源浏览器</button>
      </nav>
    </section>
  );
}

const MENUS = [["文件", "(F)"], ["", "Edit"], ["窗体", "(O)"], ["视图", "(V)"], ["设置", "(S)"], ["窗口", "(W)"], ["帮助", "(H)"]];

export default function App() {
  return (
    <div className="relative flex h-screen flex-col overflow-hidden bg-[#f0f0f0] pb-[11px] font-['Liberation_Mono','Noto_Sans_CJK_SC',monospace] text-[10px] text-black">
      <Gradients />
      {/* Title bar */}
      <div className="flex h-[14px] shrink-0 items-start bg-white font-['Liberation_Sans','Noto_Sans_CJK_SC',sans-serif]">
        <span className="flex h-[12px] w-[14px] items-center justify-center rounded-b-xs bg-[#27b34b] text-[11px] leading-[12px] font-bold text-white">D</span>
        <h1 className="ml-[6px] flex-1 text-[13px] leading-[14px]">Qt 设计师 - Qt Designer</h1>
        <div className="flex items-start gap-[26px] pr-[15px]">
          <button aria-label="Minimize window">
            <svg width="10" height="8" viewBox="0 0 10 8" stroke="#222"><path d="M0 3.500h10" /></svg>
          </button>
          <button aria-label="Restore window">
            <svg width="10" height="8" viewBox="0 0 10 8" fill="none" stroke="#222"><path d="M.500.500h7v7h-7zM8 5.500h1.500V0" /></svg>
          </button>
          <button aria-label="Close window">
            <svg width="10" height="8" viewBox="0 0 10 8" stroke="#222"><path d="M0-1l9 9M9-1L0 8" /></svg>
          </button>
        </div>
      </div>
      <nav className="flex h-[18px] shrink-0 items-center gap-4 bg-white pb-[2px] pl-[6px]">
        {MENUS.map(([cn, en]) => (
          <button key={en} className="flex items-center leading-[14px]">
            <span className="text-[11px]">{cn}</span>
            {en}
          </button>
        ))}
      </nav>
      <ToolBar />

      <div className="flex min-h-0 flex-1 gap-1">
        <WidgetBox />
        <main className="relative min-w-0 flex-1 border border-[#828790] bg-[#a0a0a0]">
          <FormWindow />
          {/* Red marker box */}
          <div className="absolute top-[39px] left-0 h-[51px] w-[112px] border-2 border-[#ed1c24]" />
        </main>
        <aside className="flex w-[1017px] shrink-0 flex-col pt-px">
          <ObjectInspector />
          <PropertyEditor />
          <SignalEditor />
        </aside>
      </div>

      {/* Red line from the Push Button entry to the form */}
      <svg width="260" height="160" viewBox="100 155 260 160" fill="none" className="pointer-events-none absolute top-[155px] left-[100px]">
        <path d="M106 311C150 295 215 255 257 223C285 203 330 174 345 161" stroke="#ed1c24" strokeWidth="2" />
      </svg>
      <span className="absolute right-[15px] bottom-[5px] font-['Liberation_Sans','Noto_Sans_CJK_SC',sans-serif] text-[14px] leading-[22px] text-[#999]">
        CSDN @慕雪诺
      </span>
    </div>
  );
}
